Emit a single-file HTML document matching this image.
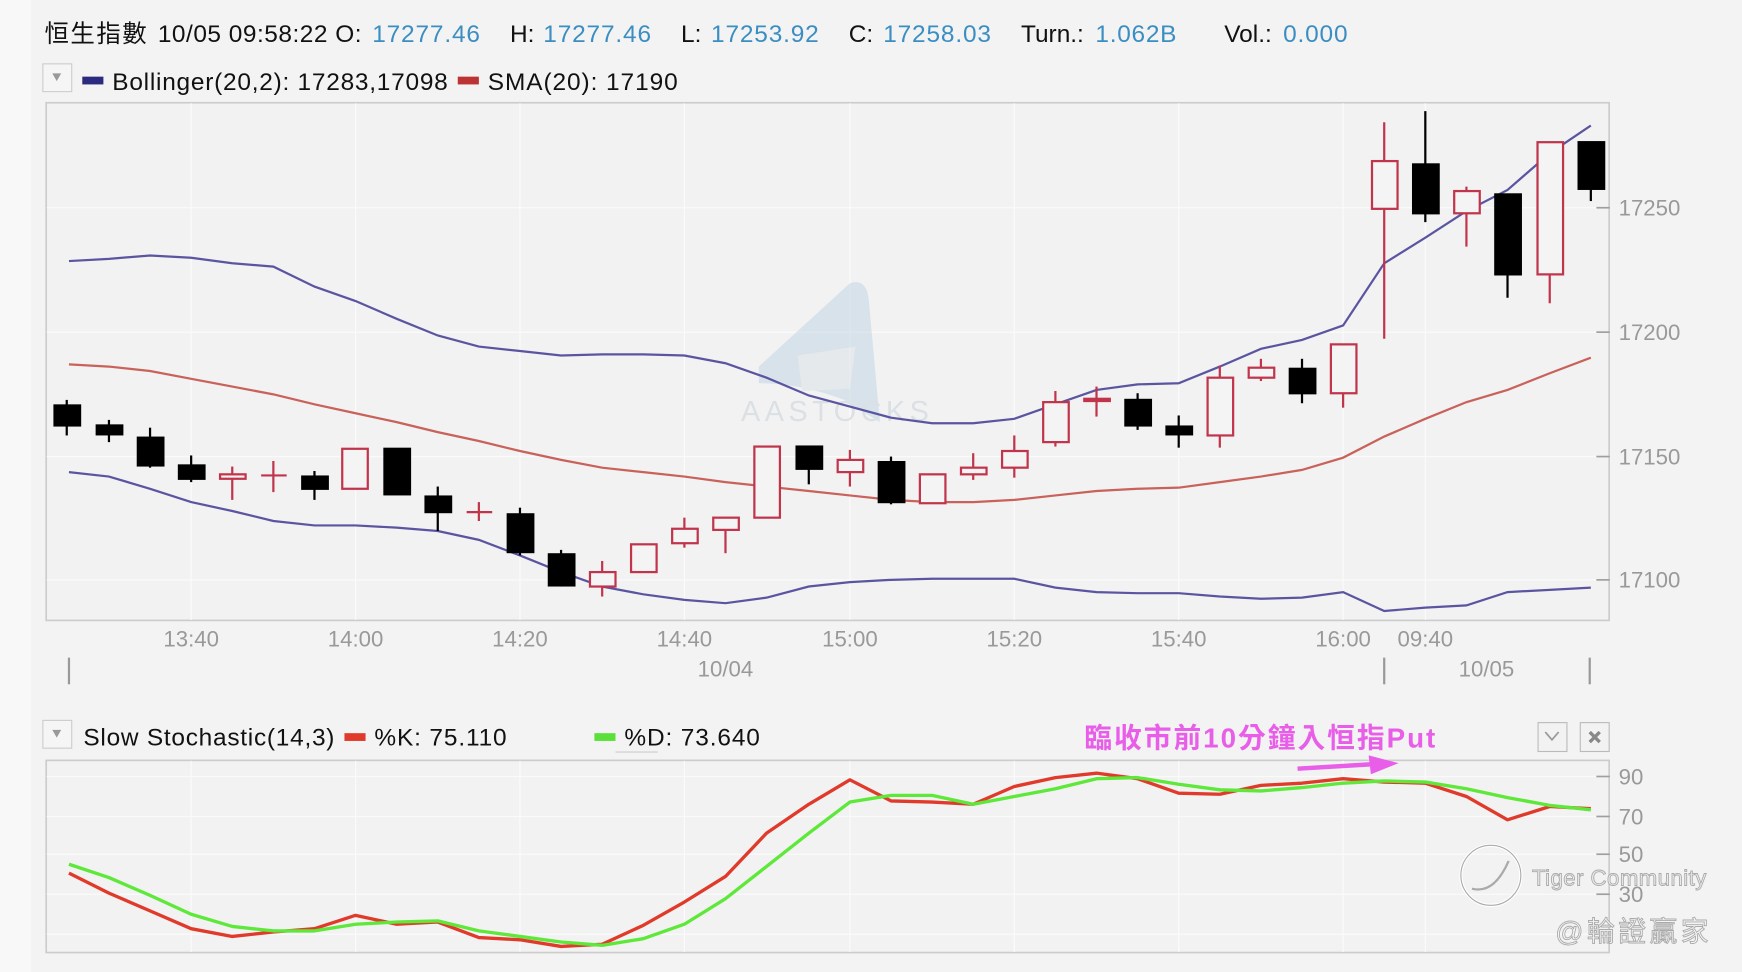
<!DOCTYPE html>
<html><head><meta charset="utf-8"><style>
html,body{margin:0;padding:0;background:#f3f3f3;width:1742px;height:972px;overflow:hidden}
svg{display:block}
text{font-family:"Liberation Sans","Noto Sans CJK TC",sans-serif}
</style></head><body>
<svg width="1742" height="972" viewBox="0 0 1568 875" xmlns="http://www.w3.org/2000/svg">
<rect width="1568" height="875" fill="#f3f3f3"/>
<rect width="28" height="875" fill="#f8f8f8"/>
<!-- header -->
<text x="40" y="38" font-size="22" fill="#111"><tspan textLength="92">恒生指數</tspan> <tspan x="142" textLength="190">10/05 09:58:22 O: </tspan><tspan x="335" fill="#3b8ec2" textLength="97">17277.46</tspan><tspan x="459">H: </tspan><tspan x="489" fill="#3b8ec2" textLength="97">17277.46</tspan><tspan x="613">L: </tspan><tspan x="640" fill="#3b8ec2" textLength="97">17253.92</tspan><tspan x="764">C: </tspan><tspan x="795" fill="#3b8ec2" textLength="97">17258.03</tspan><tspan x="919">Turn.: </tspan><tspan x="986" fill="#3b8ec2" textLength="73">1.062B</tspan><tspan x="1102">Vol.: </tspan><tspan x="1155" fill="#3b8ec2" textLength="58">0.000</tspan></text>
<rect x="38.5" y="57.5" width="26" height="25" fill="#f5f5f5" stroke="#ccc"/>
<path d="M47 66 L55 66 L51 73 Z" fill="#999"/>
<rect x="74" y="69" width="19" height="7" fill="#2a2a80"/>
<text x="101" y="81" font-size="22" fill="#111" textLength="302">Bollinger(20,2): 17283,17098</text>
<rect x="412" y="69" width="19" height="7" fill="#b33"/>
<text x="439" y="81" font-size="22" fill="#111" textLength="171">SMA(20): 17190</text>
<!-- main chart -->
<rect x="41.5" y="92.5" width="1407" height="466" fill="#f2f2f2" stroke="#ccc" stroke-width="1.5"/>
<g stroke="#fafafa" stroke-width="1.2">
<line x1="172" y1="93" x2="172" y2="558"/><line x1="320" y1="93" x2="320" y2="558"/><line x1="468" y1="93" x2="468" y2="558"/><line x1="616" y1="93" x2="616" y2="558"/><line x1="765" y1="93" x2="765" y2="558"/><line x1="913" y1="93" x2="913" y2="558"/><line x1="1061" y1="93" x2="1061" y2="558"/><line x1="1209" y1="93" x2="1209" y2="558"/><line x1="1283" y1="93" x2="1283" y2="558"/>
<line x1="42" y1="187" x2="1448" y2="187"/><line x1="42" y1="299" x2="1448" y2="299"/><line x1="42" y1="411" x2="1448" y2="411"/><line x1="42" y1="522" x2="1448" y2="522"/>
</g>
<!-- watermark -->
<g opacity="0.55">
<path d="M683 330 L765 255 Q780 250 782 270 L792 380 L760 360 Q720 345 683 345 Z" fill="#c4d6e4"/>
<path d="M718 320 L770 312 L765 350 L722 352 Z" fill="#dde2e6"/>
<text x="667" y="379" font-size="26" fill="#c9d2da" letter-spacing="4">AASTOCKS</text>
</g>
<g stroke="#9e9e9e" stroke-width="1.5"><line x1="1437" y1="187" x2="1449" y2="187"/><line x1="1437" y1="299" x2="1449" y2="299"/><line x1="1437" y1="411" x2="1449" y2="411"/><line x1="1437" y1="522" x2="1449" y2="522"/></g>
<g font-size="20" fill="#999"><text x="1457" y="194">17250</text><text x="1457" y="306">17200</text><text x="1457" y="418">17150</text><text x="1457" y="529">17100</text></g>
<!-- bands -->
<g fill="none" stroke-width="2">
<polyline stroke="#5a55a0" points="62,235 98,233 135,230 172,232 209,237 246,240 283,258 320,271 357,287 394,302 431,312 468,316 505,320 542,319 579,319 616,320 653,327 690,340 728,356 765,366 802,376 839,381 876,381 913,377 950,364 987,351 1024,346 1061,345 1098,330 1135,314 1172,306 1209,293 1246,237 1283,214 1320,190 1357,171 1395,138 1432,113"/>
<polyline stroke="#5a55a0" points="62,425 98,429 135,440 172,452 209,460 246,469 283,473 320,473 357,475 394,478 431,486 468,500 505,515 542,528 579,535 616,540 653,543 690,538 728,528 765,524 802,522 839,521 876,521 913,521 950,529 987,533 1024,534 1061,534 1098,537 1135,539 1172,538 1209,533 1246,550 1283,547 1320,545 1357,533 1395,531 1432,529"/>
<polyline stroke="#c8625a" points="62,328 98,330 135,334 172,341 209,348 246,355 283,364 320,372 357,380 394,389 431,397 468,406 505,414 542,421 579,425 616,429 653,434 690,438 728,442 765,446 802,450 839,452 876,452 913,450 950,446 987,442 1024,440 1061,439 1098,434 1135,429 1172,423 1209,412 1246,393 1283,377 1320,362 1357,351 1395,336 1432,322"/>
</g>
<!-- candles black -->
<g stroke="#000" stroke-width="2" fill="#000">
<line x1="60" y1="360" x2="60" y2="392"/><rect x="49" y="365" width="23" height="18"/>
<line x1="98" y1="378" x2="98" y2="398"/><rect x="87" y="383" width="23" height="8"/>
<line x1="135" y1="385" x2="135" y2="421"/><rect x="124" y="394" width="23" height="25"/>
<line x1="172" y1="410" x2="172" y2="434"/><rect x="161" y="419" width="23" height="12"/>
<line x1="283" y1="424" x2="283" y2="450"/><rect x="272" y="429" width="23" height="11"/>
<rect x="346" y="404" width="23" height="41"/>
<line x1="394" y1="438" x2="394" y2="478"/><rect x="383" y="447" width="23" height="14"/>
<line x1="468" y1="457" x2="468" y2="500"/><rect x="457" y="463" width="23" height="34"/>
<line x1="505" y1="495" x2="505" y2="528"/><rect x="494" y="499" width="23" height="28"/>
<line x1="728" y1="402" x2="728" y2="436"/><rect x="717" y="402" width="23" height="20"/>
<line x1="802" y1="411" x2="802" y2="454"/><rect x="791" y="416" width="23" height="36"/>
<line x1="1024" y1="354" x2="1024" y2="387"/><rect x="1013" y="360" width="23" height="23"/>
<line x1="1061" y1="374" x2="1061" y2="403"/><rect x="1050" y="384" width="23" height="7"/>
<line x1="1172" y1="323" x2="1172" y2="363"/><rect x="1161" y="332" width="23" height="22"/>
<line x1="1283" y1="100" x2="1283" y2="200"/><rect x="1272" y="148" width="23" height="44"/>
<line x1="1357" y1="175" x2="1357" y2="268"/><rect x="1346" y="175" width="23" height="72"/>
<line x1="1432" y1="128" x2="1432" y2="181"/><rect x="1421" y="128" width="23" height="42"/>
</g>
<!-- candles red -->
<g stroke="#c0354c" stroke-width="2" fill="#f4f4f4">
<line x1="209" y1="420" x2="209" y2="450"/><rect x="198" y="427" width="23" height="4"/>
<line x1="246" y1="415" x2="246" y2="443"/><line x1="235" y1="428" x2="258" y2="428"/>
<rect x="308" y="404" width="23" height="36"/>
<line x1="431" y1="452" x2="431" y2="469"/><line x1="420" y1="461" x2="443" y2="461"/>
<line x1="542" y1="505" x2="542" y2="537"/><rect x="531" y="515" width="23" height="13"/>
<rect x="568" y="490" width="23" height="25"/>
<line x1="616" y1="466" x2="616" y2="493"/><rect x="605" y="476" width="23" height="13"/>
<line x1="653" y1="466" x2="653" y2="498"/><rect x="642" y="466" width="23" height="11"/>
<rect x="679" y="402" width="23" height="64"/>
<line x1="765" y1="405" x2="765" y2="438"/><rect x="754" y="414" width="23" height="11"/>
<rect x="828" y="427" width="23" height="26"/>
<line x1="876" y1="408" x2="876" y2="432"/><rect x="865" y="421" width="23" height="6"/>
<line x1="913" y1="392" x2="913" y2="430"/><rect x="902" y="406" width="23" height="15"/>
<line x1="950" y1="352" x2="950" y2="402"/><rect x="939" y="362" width="23" height="36"/>
<line x1="987" y1="348" x2="987" y2="375"/><rect x="976" y="359" width="23" height="2"/>
<line x1="1098" y1="329" x2="1098" y2="403"/><rect x="1087" y="340" width="23" height="52"/>
<line x1="1135" y1="323" x2="1135" y2="343"/><rect x="1124" y="331" width="23" height="9"/>
<line x1="1209" y1="354" x2="1209" y2="367"/><rect x="1198" y="310" width="23" height="44"/>
<line x1="1246" y1="110" x2="1246" y2="305"/><rect x="1235" y="145" width="23" height="43"/>
<line x1="1320" y1="168" x2="1320" y2="222"/><rect x="1309" y="172" width="23" height="20"/>
<line x1="1395" y1="247" x2="1395" y2="273"/><rect x="1384" y="128" width="23" height="119"/>
</g>
<!-- x axis -->
<g font-size="20" fill="#999" text-anchor="middle">
<text x="172" y="582">13:40</text><text x="320" y="582">14:00</text><text x="468" y="582">14:20</text><text x="616" y="582">14:40</text><text x="765" y="582">15:00</text><text x="913" y="582">15:20</text><text x="1061" y="582">15:40</text><text x="1209" y="582">16:00</text><text x="1283" y="582">09:40</text>
<text x="653" y="609">10/04</text><text x="1338" y="609">10/05</text>
</g>
<g stroke="#999" stroke-width="2"><line x1="62" y1="592" x2="62" y2="616"/><line x1="1246" y1="592" x2="1246" y2="616"/><line x1="1431" y1="592" x2="1431" y2="616"/></g>
<!-- stochastic -->
<rect x="38.5" y="648.5" width="26" height="25" fill="#f5f5f5" stroke="#ccc"/>
<path d="M47 657 L55 657 L51 664 Z" fill="#999"/>
<text x="75" y="671" font-size="22" fill="#111" textLength="226">Slow Stochastic(14,3)</text>
<rect x="310" y="660" width="19" height="7" fill="#e03a2a"/>
<text x="337" y="671" font-size="22" fill="#111" textLength="119">%K: 75.110</text>
<rect x="535" y="660" width="19" height="7" fill="#5be03a"/>
<text x="562" y="671" font-size="22" fill="#111" textLength="122">%D: 73.640</text>
<g stroke="#d8d8d8" stroke-width="1.5"><line x1="554" y1="677" x2="592" y2="677"/><line x1="554" y1="688" x2="592" y2="688"/></g>
<text x="976" y="673" font-size="25" font-weight="bold" fill="#e85ee8" textLength="316">臨收市前10分鐘入恒指Put</text>
<rect x="1384.5" y="650.5" width="26" height="26" fill="#f2f2f2" stroke="#bbb"/>
<path d="M1391 659 L1397 666 L1403 659" fill="none" stroke="#999" stroke-width="1.5"/>
<rect x="1422.5" y="650.5" width="26" height="26" fill="#f2f2f2" stroke="#bbb"/>
<path d="M1431 659 L1440 668 M1440 659 L1431 668" stroke="#888" stroke-width="3"/>
<rect x="41.5" y="684.5" width="1407" height="173" fill="#f2f2f2" stroke="#ccc" stroke-width="1.5"/>
<g stroke="#fafafa" stroke-width="1.2">
<line x1="42" y1="699" x2="1448" y2="699"/><line x1="42" y1="735" x2="1448" y2="735"/><line x1="42" y1="769" x2="1448" y2="769"/><line x1="42" y1="805" x2="1448" y2="805"/><line x1="42" y1="841" x2="1448" y2="841"/>
<line x1="172" y1="685" x2="172" y2="857"/><line x1="320" y1="685" x2="320" y2="857"/><line x1="468" y1="685" x2="468" y2="857"/><line x1="616" y1="685" x2="616" y2="857"/><line x1="765" y1="685" x2="765" y2="857"/><line x1="913" y1="685" x2="913" y2="857"/><line x1="1061" y1="685" x2="1061" y2="857"/><line x1="1209" y1="685" x2="1209" y2="857"/><line x1="1283" y1="685" x2="1283" y2="857"/>
</g>
<g stroke="#9e9e9e" stroke-width="1.5"><line x1="1437" y1="699" x2="1449" y2="699"/><line x1="1437" y1="735" x2="1449" y2="735"/><line x1="1437" y1="769" x2="1449" y2="769"/><line x1="1437" y1="805" x2="1449" y2="805"/></g>
<g font-size="20" fill="#999"><text x="1457" y="706">90</text><text x="1457" y="742">70</text><text x="1457" y="776">50</text><text x="1457" y="812">30</text></g>
<g fill="none" stroke-width="3" stroke-linejoin="round">
<polyline stroke="#e03a2a" points="62,786 98,804 135,820 172,836 209,843 246,839 283,836 320,824 357,832 394,830 431,844 468,846 505,852 542,850 579,833 616,812 653,789 690,750 728,724 765,702 802,721 839,722 876,724 913,708 950,700 987,696 1024,701 1061,714 1098,715 1135,707 1172,705 1209,701 1246,704 1283,705 1320,717 1357,738 1395,726 1432,728"/>
<polyline stroke="#5ee83a" points="62,778 98,790 135,806 172,823 209,834 246,838 283,838 320,832 357,830 394,829 431,838 468,843 505,848 542,851 579,845 616,832 653,809 690,780 728,750 765,722 802,716 839,716 876,724 913,717 950,710 987,701 1024,700 1061,706 1098,711 1135,712 1172,709 1209,705 1246,703 1283,704 1320,710 1357,718 1395,725 1432,729"/>
</g>
<!-- arrow -->
<path d="M1168 692 L1235 688" stroke="#e85ee8" stroke-width="4"/>
<path d="M1232 680 L1259 687 L1234 697 Z" fill="#e85ee8"/>
<!-- tiger watermark -->
<circle cx="1342" cy="788" r="27" fill="none" stroke="#fff" stroke-width="3"/>
<circle cx="1342" cy="788" r="27" fill="none" stroke="#aaa" stroke-width="1"/>
<path d="M1325 800 Q1345 805 1358 775" fill="none" stroke="#aaa" stroke-width="2"/>
<text x="1379" y="797" font-size="20" fill="#eee" stroke="#aaa" stroke-width="0.8" textLength="157">Tiger Community</text>
<text x="1400" y="847" font-size="25" fill="#f6f6f6" stroke="#aaa" stroke-width="0.8" textLength="138">@輪證贏家</text>
</svg>
</body></html>
